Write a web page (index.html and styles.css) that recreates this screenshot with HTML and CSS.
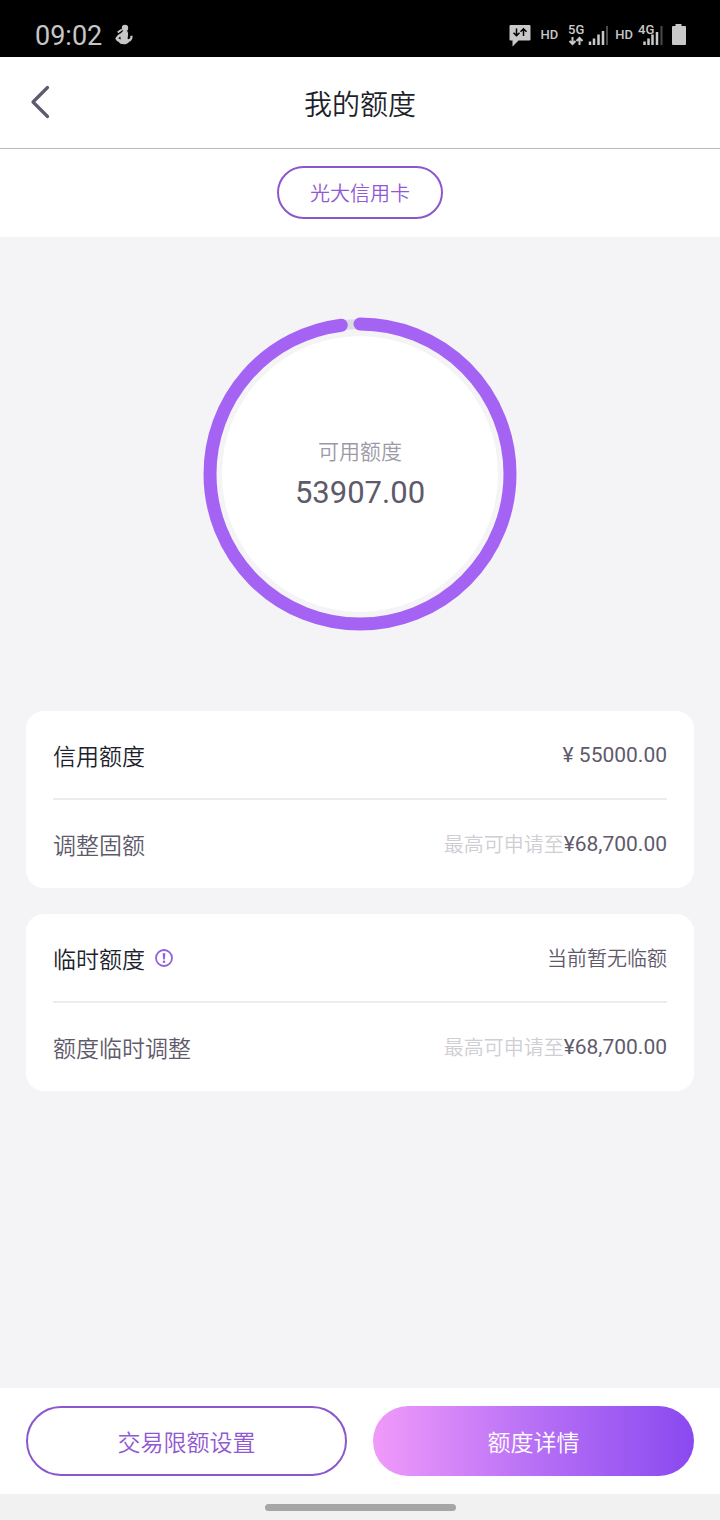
FILE: index.html
```html
<!DOCTYPE html>
<html lang="zh-CN">
<head>
<meta charset="utf-8">
<meta name="viewport" content="width=device-width, initial-scale=1">
<title>我的额度</title>
<link rel="stylesheet" href="styles.css">
</head>
<body>
<div class="screen">
  <div class="status">
    <div class="status-left">
      <span class="clock">09:02</span>
      <svg class="app-icon" width="18" height="22" viewBox="0 0 18 22" aria-hidden="true">
        <circle cx="10" cy="4" r="3.200" fill="#c6c6c6"/>
        <path d="M8.500 6.500h3.300c1.300 1.800 1.600 3.600 1.100 5.600l-.3 3c1.400.3 2.400-.6 2.800-2.200l-.2-.9 2.300-.6c.5 3.200-.9 5.500-3.500 6.500-1.200 1.600-3 2.300-5.200 2.300-2.600 0-4.300-.7-4.900-2.200C2.300 17.500 1 16.300.3 14.500c1.100-2.200 2.800-3.900 5.500-5.300z" fill="#c6c6c6"/>
        <path d="M2.700 8.500L6.800 5.500" stroke="#c6c6c6" stroke-width="1.800" fill="none"/>
        <path d="M3.300 14.200l2-1.600.5 2.800z" fill="#000"/>
      </svg>
    </div>
    <div class="status-right">
      <svg class="bubble" width="22" height="23" viewBox="0 0 22 23" aria-hidden="true">
        <path d="M1.500 1h19q1 0 1 1v13.500q0 1-1 1H9.500L3.500 22.500v-6h-2q-1 0-1-1V2q0-1 1-1z" fill="#c9c9c9"/>
        <path d="M7.500 4.500v7M4.500 8.800l3 3 3-3M14.500 12v-7M11.500 7.800l3-3 3 3" fill="none" stroke="#000" stroke-width="1.500"/>
      </svg>
      <span class="hd">HD</span>
      <svg class="net net-5g" width="40" height="24" viewBox="0 0 40 24" aria-hidden="true">
        <text class="net-text" x="0" y="11">5G</text>
        <path d="M4.500 14v7M1.500 18l3 3 3-3M11.500 22v-7M8.500 18l3-3 3 3" fill="none" stroke="#c9c9c9" stroke-width="2"/>
        <path d="M22 18.500V22M26 15.500V22M30.500 11.500V22M35 8V22" stroke="#c9c9c9" stroke-width="2.500"/>
        <path d="M39 3V22" stroke="#4a4a4a" stroke-width="2"/>
      </svg>
      <span class="hd">HD</span>
      <svg class="net net-4g" width="25" height="24" viewBox="0 0 25 24" aria-hidden="true">
        <text class="net-text" x="0" y="11">4G</text>
        <path d="M6.500 18.500V22M10.500 15.500V22M14.500 11.500V22M19 9V22" stroke="#c9c9c9" stroke-width="2.500"/>
        <path d="M23.500 3V22" stroke="#4a4a4a" stroke-width="2"/>
      </svg>
      <svg class="battery" width="16" height="24" viewBox="0 0 16 24" aria-hidden="true">
        <path d="M4.500 1h6v2H14q1 0 1 1v17q0 1-1 1H2q-1 0-1-1V4q0-1 1-1h2.500z" fill="#c9c9c9"/>
      </svg>
    </div>
  </div>

  <header class="header">
    <button class="back" type="button" aria-label="返回">
      <svg width="20" height="34" viewBox="0 0 20 34" aria-hidden="true">
        <path d="M17.500 2.500L3 17l14.500 14.500" fill="none" stroke="#5f5a6e" stroke-width="3.200" stroke-linecap="round" stroke-linejoin="round"/>
      </svg>
    </button>
    <h1 class="title">我的额度</h1>
  </header>

  <div class="tabs">
    <button class="tab" type="button">光大信用卡</button>
  </div>

  <main class="main">
    <section class="gauge">
      <svg class="ring" width="314" height="314" viewBox="0 0 314 314" aria-hidden="true">
        <circle cx="157" cy="157" r="138" fill="#fff"/>
        <circle cx="157" cy="157" r="150" fill="none" stroke="#dcdbe2" stroke-width="10"/>
        <circle cx="157" cy="157" r="150" fill="none" stroke="#a563f4" stroke-width="13" stroke-linecap="round" pathLength="100" stroke-dasharray="98 100" transform="rotate(-90 157 157)"/>
      </svg>
      <div class="gauge-text">
        <span class="gauge-label">可用额度</span>
        <span class="gauge-value">53907.00</span>
      </div>
    </section>

    <section class="card">
      <div class="row">
        <span class="name name-strong">信用额度</span>
        <span class="amount">¥ 55000.00</span>
      </div>
      <div class="row">
        <span class="name">调整固额</span>
        <span class="value"><span class="hint">最高可申请至</span><span class="amount">¥68,700.00</span></span>
      </div>
    </section>

    <section class="card">
      <div class="row">
        <span class="name name-strong">临时额度</span>
        <button class="info" type="button" aria-label="说明">
          <svg width="20" height="20" viewBox="0 0 20 20" aria-hidden="true">
            <circle cx="10" cy="10" r="8" fill="none" stroke="#9460dc" stroke-width="1.800"/>
            <path d="M8.600 5.300h2.800l-.6 6.200H9.200z" fill="#9460dc"/>
            <circle cx="10" cy="13.800" r="1.300" fill="#9460dc"/>
          </svg>
        </button>
        <span class="note">当前暂无临额</span>
      </div>
      <div class="row">
        <span class="name">额度临时调整</span>
        <span class="value"><span class="hint">最高可申请至</span><span class="amount">¥68,700.00</span></span>
      </div>
    </section>
  </main>

  <footer class="actions">
    <button class="btn btn-outline" type="button">交易限额设置</button>
    <button class="btn btn-fill" type="button">额度详情</button>
  </footer>
  <div class="navbar"><span class="handle"></span></div>
</div>
</body>
</html>
```
FILE: styles.css
```css
* {
  box-sizing: border-box;
}

body {
  margin: 0;
  background: #f4f4f7;
  color: #5f5a6b;
  font-family: "Noto Sans CJK SC", sans-serif;
  font-weight: 350;
}

button {
  margin: 0;
  padding: 0;
  border: 0;
  background: none;
  font: inherit;
  cursor: pointer;
}

svg {
  display: block;
}

.screen {
  display: flex;
  flex-direction: column;
  min-height: 100vh;
}

.status {
  display: flex;
  justify-content: space-between;
  align-items: center;
  height: 57px;
  padding: 13px 33px 0 35px;
  background: #000;
  color: #c6c6c6;
  font-family: Roboto, sans-serif;
  font-weight: 400;
}

.status-left,
.status-right {
  display: flex;
  align-items: center;
}

.status-left {
  gap: 13px;
}

.clock {
  padding-top: 2px;
  font-size: 27px;
  line-height: 32px;
}

.hd {
  margin-left: 10px;
  font-size: 13px;
  font-weight: 500;
  line-height: 20px;
}

.net {
  margin-left: 10px;
}

.net-5g + .hd {
  margin-left: 7px;
}

.net-4g {
  margin-left: 5px;
}

.net-text {
  fill: #c9c9c9;
  font-size: 13px;
  font-weight: 500;
}

.battery {
  margin-left: 8px;
}

.header {
  display: grid;
  grid-template-columns: 80px 1fr 80px;
  align-items: center;
  height: 92px;
  border-bottom: 1px solid #bbb;
  background: #fff;
}

.back {
  padding: 5px 30px 7px;
}

.title {
  margin: 0;
  color: #211f2b;
  font-size: 28px;
  font-weight: inherit;
  line-height: 40px;
  text-align: center;
}

.tabs {
  display: flex;
  justify-content: center;
  padding: 17px 26px 18px;
  background: #fff;
}

.tab {
  height: 53px;
  padding: 0 31px;
  border: 2px solid #8b57cc;
  border-radius: 27px;
  color: #9058d2;
  font-size: 20px;
}

.main {
  flex: 1;
  padding: 0 26px 26px;
}

.gauge {
  display: grid;
  place-items: center;
  padding: 80px 0;
}

.ring,
.gauge-text {
  grid-area: 1 / 1;
}

.gauge-text {
  display: flex;
  flex-direction: column;
  align-items: center;
  gap: 8px;
}

.gauge-label {
  color: #9c9aa6;
  font-size: 21px;
  line-height: 30px;
}

.gauge-value {
  font-family: Roboto, sans-serif;
  font-size: 31px;
  font-weight: 400;
  line-height: 40px;
}

.card {
  padding: 0 27px;
  border-radius: 18px;
  background: #fff;
}

.card + .card {
  margin-top: 26px;
}

.row {
  display: flex;
  align-items: center;
  justify-content: space-between;
  height: 87px;
}

.row + .row {
  height: 90px;
  border-top: 2px solid #ececee;
}

.name {
  font-size: 23px;
  line-height: 36px;
}

.name-strong {
  color: #211f2b;
}

.info {
  margin: 0 auto 0 9px;
}

.value {
  display: flex;
  align-items: center;
}

.hint,
.note {
  font-size: 20px;
  line-height: 30px;
}

.hint {
  color: #cfced3;
}

.amount {
  font-family: Roboto, sans-serif;
  font-size: 21px;
  font-weight: 400;
  line-height: 30px;
}

.actions {
  display: grid;
  grid-template-columns: 1fr 1fr;
  gap: 26px;
  padding: 18px 26px;
  background: #fff;
}

.btn {
  height: 70px;
  border-radius: 35px;
  font-size: 23px;
}

.btn-outline {
  border: 2px solid #8b57cc;
  color: #9058d2;
}

.btn-fill {
  background: linear-gradient(90deg, #f09afa, #b26cf5 55%, #8a49f0);
  color: #fff;
}

.navbar {
  display: flex;
  justify-content: center;
  align-items: center;
  height: 26px;
  background: #f1f1f1;
}

.handle {
  width: 191px;
  height: 7px;
  border-radius: 4px;
  background: #a6a6a6;
}
```
